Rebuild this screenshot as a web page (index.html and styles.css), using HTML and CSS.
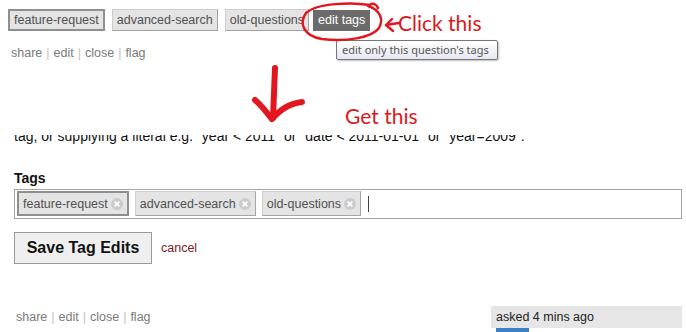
FILE: index.html
```html
<!DOCTYPE html>
<html>
<head>
<meta charset="utf-8">
<title>Edit tags</title>
<link rel="stylesheet" href="styles.css">
</head>
<body>
<div class="page">
  <section class="before">
    <div class="tagrow">
      <span class="tag tag-sel">feature-request</span>
      <span class="tag">advanced-search</span>
      <span class="tag">old-questions</span>
      <span class="tag tag-edit">edit tags</span>
    </div>
    <div class="links links-top">
      <a>share</a><span class="sep">|</span><a>edit</a><span class="sep">|</span><a>close</a><span class="sep">|</span><a>flag</a>
    </div>
  </section>

  <div class="clipline"><p>tag, or supplying a literal e.g. "year &lt; 2011" or "date &lt; 2011-01-01" or "year=2009".</p></div>

  <section class="form">
    <div class="label">Tags</div>
    <div class="tagbox">
      <span class="itag itag-sel">feature-request<svg class="x" viewBox="0 0 12 12"><circle cx="6" cy="6" r="6" fill="#cbcbcb"/><path d="M3.7 3.7L8.3 8.3M8.3 3.7L3.7 8.3" stroke="#fff" stroke-width="1.8"/></svg></span>
      <span class="itag">advanced-search<svg class="x" viewBox="0 0 12 12"><circle cx="6" cy="6" r="6" fill="#cbcbcb"/><path d="M3.7 3.7L8.3 8.3M8.3 3.7L3.7 8.3" stroke="#fff" stroke-width="1.8"/></svg></span>
      <span class="itag">old-questions<svg class="x" viewBox="0 0 12 12"><circle cx="6" cy="6" r="6" fill="#cbcbcb"/><path d="M3.7 3.7L8.3 8.3M8.3 3.7L3.7 8.3" stroke="#fff" stroke-width="1.8"/></svg></span>
      <span class="caret"></span>
    </div>
    <div class="actions">
      <button class="save">Save Tag Edits</button>
      <a class="cancel">cancel</a>
    </div>
  </section>

  <section class="bottom">
    <div class="links">
      <a>share</a><span class="sep">|</span><a>edit</a><span class="sep">|</span><a>close</a><span class="sep">|</span><a>flag</a>
    </div>
    <div class="asked">asked 4 mins ago<span class="bluebar"></span></div>
  </section>

  <div class="tooltip">edit only this question's tags</div>
  <svg class="annotations" viewBox="0 0 686 140" width="686" height="140">
    <g fill="none" stroke="#e3161f" stroke-linecap="round" stroke-linejoin="round">
      <path stroke-width="2.4" d="M370 5 C352 2 317 3 306 13 C299 23 303 36 322 39 C345 42 372 38 379 28 C384 19 380 10 368 6 M371 4 C374 3 377 5 378 8"/>
      <path stroke-width="2.4" d="M386 25 L399 23 M386 25 L392 19 M386 25 L393 31"/>
      <path stroke-width="6" d="M275 68 L273 118"/>
      <path stroke-width="6" d="M255 100 C262 106 267 113 272 119 C280 110 288 104 302 102"/>
    </g>
  </svg>
  <span class="note note-click">Click this</span>
  <span class="note note-get">Get this</span>
</div>
</body>
</html>
```

FILE: styles.css
```css
* { box-sizing: border-box; }
html, body { margin: 0; padding: 0; background: #fff; }
body {
  font-family: "Liberation Sans", Arial, sans-serif;
  font-size: 12.5px;
  color: #000;
  width: 686px;
  height: 332px;
  overflow: hidden;
}
.page { position: relative; width: 686px; height: 332px; }

.before { padding: 9px 0 0 8px; }
.tagrow { display: flex; align-items: center; gap: 7px; height: 22px; }
.tag {
  display: inline-flex; align-items: center;
  height: 22px; padding: 0 4px;
  background: #e4e4e4; color: #505050;
  border: 1px solid #cdcdcd;
  border-right-color: #a3a3a3; border-bottom-color: #a3a3a3;
  line-height: 16px;
}
.tag-sel { border: 2px solid #8f8f8f; }
.tag-edit {
  margin-left: -3px; height: 21px; padding: 0 5px;
  background: #6b6b6b; color: #fff; border: none;
}

.links { color: #7a7a7a; line-height: 16px; }
.links a { color: #7a7a7a; }
.links .sep { color: #c4c4c4; margin: 0 4px; }
.links-top { margin: 14px 0 0 3px; }

.clipline { height: 10px; overflow: hidden; margin: 74px 0 0 14px; }
.clipline p { margin: -7px 0 0; font-size: 14px; line-height: 16px; color: #111; white-space: nowrap; }

.form { padding-left: 14px; margin-top: 25px; }
.label { font-weight: bold; font-size: 14px; line-height: 16px; color: #111; }
.tagbox {
  margin-top: 3px; width: 668px; height: 30px;
  border: 1px solid #a5a5a5;
  padding: 1px 2px 2px;
  display: flex; align-items: stretch;
}
.itag {
  display: inline-flex; align-items: center; gap: 3px;
  height: 25px; padding: 0 4px; margin-right: 6px;
  background: #e4e4e4; color: #505050;
  border: 1px solid #cfcfcf;
  border-right-color: #a6a6a6; border-bottom-color: #a6a6a6;
}
.itag-sel { border: 2px solid #8f8f8f; }
.x { width: 12px; height: 12px; display: block; }
.caret { width: 1px; height: 16px; background: #444; align-self: center; margin-left: 1px; }

.actions { margin-top: 13px; display: flex; align-items: center; gap: 9px; }
.save {
  height: 32px; width: 138px; padding: 0;
  font-family: "Liberation Sans", Arial, sans-serif;
  font-size: 16px; font-weight: bold; color: #111;
  background: #efefef;
  border: 1px solid #9a9a9a;
  border-radius: 0;
}
.cancel { color: #7d1d1d; font-size: 12.5px; margin-top: 0; }

.bottom {
  margin-top: 42px; padding: 0 4px 0 16px;
  display: flex; justify-content: space-between; align-items: center;
}
.asked {
  position: relative;
  width: 191px; height: 22px; padding: 3px 5px 0;
  background: #e6e6e6; color: #222; font-size: 12.5px; line-height: 16px;
}
.bluebar {
  position: absolute; left: 5px; top: 22px;
  width: 33px; height: 5px; background: #3b7fc4;
}

.tooltip {
  position: absolute; left: 336px; top: 40px;
  width: 162px; height: 20px;
  padding: 0 0 0 5px;
  border: 1px solid #767676; border-radius: 2px;
  background: linear-gradient(#ffffff, #e6e7f0);
  box-shadow: 1px 1px 2px rgba(0,0,0,0.25);
  font-family: "Noto Sans", "Open Sans", sans-serif;
  font-size: 11px; line-height: 18px; color: #575757;
  white-space: nowrap;
}
.annotations { position: absolute; left: 0; top: 0; pointer-events: none; }
.note {
  position: absolute;
  font-family: Lato, "Open Sans", sans-serif;
  font-size: 21px; line-height: 24px; color: #dc1820;
  white-space: nowrap;
}
.note-click { left: 398px; top: 11px; }
.note-get { left: 345px; top: 104px; }
```
